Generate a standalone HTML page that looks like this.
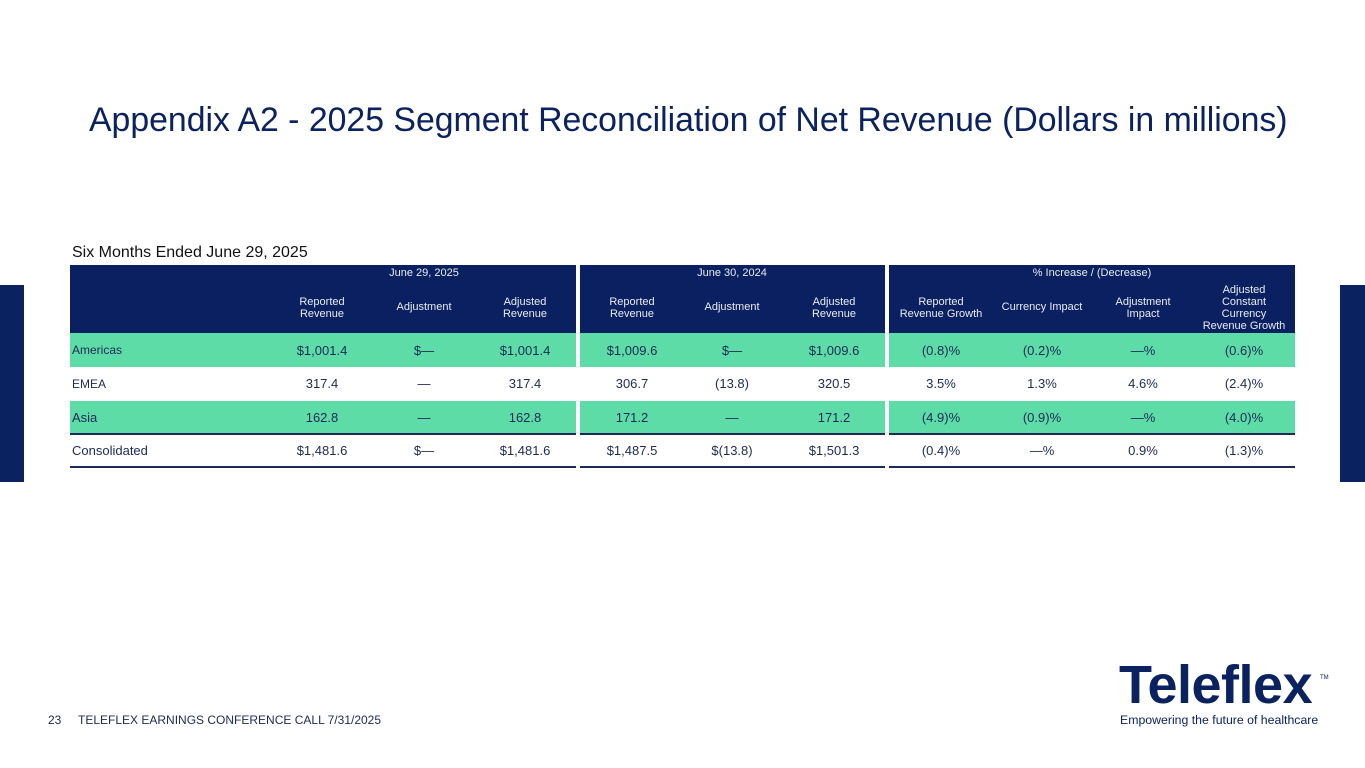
<!DOCTYPE html>
<html><head><meta charset="utf-8"><style>
body{margin:0;width:1365px;height:768px;position:relative;background:#fff;font-family:"Liberation Sans",sans-serif;overflow:hidden;color:#1c2a55}
.a{position:absolute}
.c{position:absolute;text-align:center;transform:translateX(-50%);white-space:nowrap}
.h{color:#e8ecf5;font-size:11px;line-height:12px}
.d{font-size:13px}
</style></head><body>
<div class="a" style="left:0;top:285px;width:24px;height:197px;background:#0b2260"></div>
<div class="a" style="left:1340px;top:285px;width:25px;height:197px;background:#0b2260"></div>
<div class="a" style="left:89px;top:101px;font-size:33.8px;color:#0b2260;white-space:nowrap">Appendix A2 - 2025 Segment Reconciliation of Net Revenue (Dollars in millions)</div>
<div class="a" style="left:72px;top:244px;font-size:16px;color:#111">Six Months Ended June 29, 2025</div>

<div class="a" style="left:70px;top:265px;width:506px;height:68px;background:#0b2060"></div>
<div class="a" style="left:580px;top:265px;width:305px;height:68px;background:#0b2060"></div>
<div class="a" style="left:889px;top:265px;width:406px;height:68px;background:#0b2060"></div>
<div class="a" style="left:70px;top:333px;width:506px;height:34px;background:#5ddca8"></div>
<div class="a" style="left:580px;top:333px;width:305px;height:34px;background:#5ddca8"></div>
<div class="a" style="left:889px;top:333px;width:406px;height:34px;background:#5ddca8"></div>
<div class="a" style="left:70px;top:401px;width:506px;height:33px;background:#5ddca8"></div>
<div class="a" style="left:580px;top:401px;width:305px;height:33px;background:#5ddca8"></div>
<div class="a" style="left:889px;top:401px;width:406px;height:33px;background:#5ddca8"></div>
<div class="a" style="left:70px;top:433px;width:506px;height:2px;background:#1c2a55"></div>
<div class="a" style="left:580px;top:433px;width:305px;height:2px;background:#1c2a55"></div>
<div class="a" style="left:889px;top:433px;width:406px;height:2px;background:#1c2a55"></div>
<div class="a" style="left:70px;top:466px;width:506px;height:2px;background:#1c2a55"></div>
<div class="a" style="left:580px;top:466px;width:305px;height:2px;background:#1c2a55"></div>
<div class="a" style="left:889px;top:466px;width:406px;height:2px;background:#1c2a55"></div>

<div class="c h" style="left:424px;top:267px">June 29, 2025</div>
<div class="c h" style="left:732px;top:267px">June 30, 2024</div>
<div class="c h" style="left:1092px;top:267px">% Increase / (Decrease)</div>

<div class="c h" style="left:322px;top:296px">Reported<br>Revenue</div>
<div class="c h" style="left:424px;top:301px">Adjustment</div>
<div class="c h" style="left:525px;top:296px">Adjusted<br>Revenue</div>
<div class="c h" style="left:632px;top:296px">Reported<br>Revenue</div>
<div class="c h" style="left:732px;top:301px">Adjustment</div>
<div class="c h" style="left:834px;top:296px">Adjusted<br>Revenue</div>
<div class="c h" style="left:941px;top:296px">Reported<br>Revenue Growth</div>
<div class="c h" style="left:1042px;top:301px">Currency Impact</div>
<div class="c h" style="left:1143px;top:296px">Adjustment<br>Impact</div>
<div class="c h" style="left:1244px;top:284px">Adjusted<br>Constant<br>Currency<br>Revenue Growth</div>

<div class="a d" style="left:72px;top:343px;font-size:12px">Americas</div>
<div class="a d" style="left:72px;top:377px;font-size:12px">EMEA</div>
<div class="a d" style="left:72px;top:410px">Asia</div>
<div class="a d" style="left:72px;top:443px">Consolidated</div>

<div class="c d" style="left:322px;top:343px">$1,001.4</div><div class="c d" style="left:424px;top:343px">$—</div><div class="c d" style="left:525px;top:343px">$1,001.4</div><div class="c d" style="left:632px;top:343px">$1,009.6</div><div class="c d" style="left:732px;top:343px">$—</div><div class="c d" style="left:834px;top:343px">$1,009.6</div><div class="c d" style="left:941px;top:343px">(0.8)%</div><div class="c d" style="left:1042px;top:343px">(0.2)%</div><div class="c d" style="left:1143px;top:343px">—%</div><div class="c d" style="left:1244px;top:343px">(0.6)%</div>

<div class="c d" style="left:322px;top:376px">317.4</div><div class="c d" style="left:424px;top:376px">—</div><div class="c d" style="left:525px;top:376px">317.4</div><div class="c d" style="left:632px;top:376px">306.7</div><div class="c d" style="left:732px;top:376px">(13.8)</div><div class="c d" style="left:834px;top:376px">320.5</div><div class="c d" style="left:941px;top:376px">3.5%</div><div class="c d" style="left:1042px;top:376px">1.3%</div><div class="c d" style="left:1143px;top:376px">4.6%</div><div class="c d" style="left:1244px;top:376px">(2.4)%</div>

<div class="c d" style="left:322px;top:410px">162.8</div><div class="c d" style="left:424px;top:410px">—</div><div class="c d" style="left:525px;top:410px">162.8</div><div class="c d" style="left:632px;top:410px">171.2</div><div class="c d" style="left:732px;top:410px">—</div><div class="c d" style="left:834px;top:410px">171.2</div><div class="c d" style="left:941px;top:410px">(4.9)%</div><div class="c d" style="left:1042px;top:410px">(0.9)%</div><div class="c d" style="left:1143px;top:410px">—%</div><div class="c d" style="left:1244px;top:410px">(4.0)%</div>

<div class="c d" style="left:322px;top:443px">$1,481.6</div><div class="c d" style="left:424px;top:443px">$—</div><div class="c d" style="left:525px;top:443px">$1,481.6</div><div class="c d" style="left:632px;top:443px">$1,487.5</div><div class="c d" style="left:732px;top:443px">$(13.8)</div><div class="c d" style="left:834px;top:443px">$1,501.3</div><div class="c d" style="left:941px;top:443px">(0.4)%</div><div class="c d" style="left:1042px;top:443px">—%</div><div class="c d" style="left:1143px;top:443px">0.9%</div><div class="c d" style="left:1244px;top:443px">(1.3)%</div>

<div class="a" style="left:48px;top:713px;font-size:12px;color:#1c2a55;white-space:nowrap">23&nbsp;&nbsp;&nbsp;&nbsp;&nbsp;TELEFLEX EARNINGS CONFERENCE CALL 7/31/2025</div>

<div class="a" style="left:1119px;top:655px;font-size:54px;font-weight:bold;color:#0b2260;letter-spacing:-0.5px;line-height:60px">Teleflex</div>
<div class="a" style="left:1320px;top:675px;font-size:6px;color:#0b2260">TM</div>
<div class="a" style="left:1120px;top:713px;font-size:12.3px;color:#0b2260;white-space:nowrap">Empowering the future of healthcare</div>
</body></html>
